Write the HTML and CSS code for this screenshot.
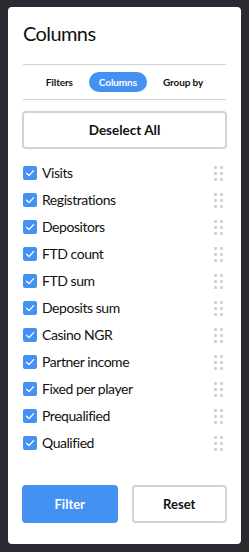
FILE: index.html
```html
<!DOCTYPE html>
<html>
<head>
<meta charset="utf-8">
<link rel="stylesheet" href="styles.css">
</head>
<body>
<div class="panel">
  <h1 class="title">Columns</h1>
  <div class="tabs">
    <span class="tab">Filters</span>
    <span class="tab active">Columns</span>
    <span class="tab">Group by</span>
  </div>
  <button class="btn outline deselect">Deselect All</button>
  <ul class="list">
    <li class="row"><span class="check"><svg viewBox="0 0 14 14"><path d="M3.5 7.2 L6 9.6 L10.6 4.6" /></svg></span><span class="label">Visits</span><span class="handle"><i></i><i></i><i></i><i></i><i></i><i></i></span></li>
    <li class="row"><span class="check"><svg viewBox="0 0 14 14"><path d="M3.5 7.2 L6 9.6 L10.6 4.6" /></svg></span><span class="label">Registrations</span><span class="handle"><i></i><i></i><i></i><i></i><i></i><i></i></span></li>
    <li class="row"><span class="check"><svg viewBox="0 0 14 14"><path d="M3.5 7.2 L6 9.6 L10.6 4.6" /></svg></span><span class="label">Depositors</span><span class="handle"><i></i><i></i><i></i><i></i><i></i><i></i></span></li>
    <li class="row"><span class="check"><svg viewBox="0 0 14 14"><path d="M3.5 7.2 L6 9.6 L10.6 4.6" /></svg></span><span class="label">FTD count</span><span class="handle"><i></i><i></i><i></i><i></i><i></i><i></i></span></li>
    <li class="row"><span class="check"><svg viewBox="0 0 14 14"><path d="M3.5 7.2 L6 9.6 L10.6 4.6" /></svg></span><span class="label">FTD sum</span><span class="handle"><i></i><i></i><i></i><i></i><i></i><i></i></span></li>
    <li class="row"><span class="check"><svg viewBox="0 0 14 14"><path d="M3.5 7.2 L6 9.6 L10.6 4.6" /></svg></span><span class="label">Deposits sum</span><span class="handle"><i></i><i></i><i></i><i></i><i></i><i></i></span></li>
    <li class="row"><span class="check"><svg viewBox="0 0 14 14"><path d="M3.5 7.2 L6 9.6 L10.6 4.6" /></svg></span><span class="label">Casino NGR</span><span class="handle"><i></i><i></i><i></i><i></i><i></i><i></i></span></li>
    <li class="row"><span class="check"><svg viewBox="0 0 14 14"><path d="M3.5 7.2 L6 9.6 L10.6 4.6" /></svg></span><span class="label">Partner income</span><span class="handle"><i></i><i></i><i></i><i></i><i></i><i></i></span></li>
    <li class="row"><span class="check"><svg viewBox="0 0 14 14"><path d="M3.5 7.2 L6 9.6 L10.6 4.6" /></svg></span><span class="label">Fixed per player</span><span class="handle"><i></i><i></i><i></i><i></i><i></i><i></i></span></li>
    <li class="row"><span class="check"><svg viewBox="0 0 14 14"><path d="M3.5 7.2 L6 9.6 L10.6 4.6" /></svg></span><span class="label">Prequalified</span><span class="handle"><i></i><i></i><i></i><i></i><i></i><i></i></span></li>
    <li class="row"><span class="check"><svg viewBox="0 0 14 14"><path d="M3.5 7.2 L6 9.6 L10.6 4.6" /></svg></span><span class="label">Qualified</span><span class="handle"><i></i><i></i><i></i><i></i><i></i><i></i></span></li>
  </ul>
  <div class="actions">
    <button class="btn primary">Filter</button>
    <button class="btn outline">Reset</button>
  </div>
</div>
</body>
</html>
```

FILE: styles.css
```css
* { box-sizing: border-box; }
html, body { margin: 0; padding: 0; }
body {
  background: #2b2a31;
  font-family: Lato, "Noto Sans", sans-serif;
  color: #111;
  padding: 7px 8px 8px 8px;
}
.panel {
  background: #fff;
  border-radius: 4px;
  height: 537px;
  padding: 0 14px;
  display: flex;
  flex-direction: column;
}
.title {
  margin: 0;
  padding-top: 12px;
  font-size: 20px;
  font-weight: 400;
  line-height: 28px;
  letter-spacing: -0.6px;
  padding-left: 1px;
  height: 57px;
}
.tabs {
  border-top: 1px solid #d4d4d4;
  border-bottom: 1px solid #d4d4d4;
  margin: 0 1px;
  height: 36px;
  display: flex;
  align-items: center;
  justify-content: center;
  gap: 6px;
}
.tab {
  font-size: 10px;
  font-weight: 700;
  height: 20px;
  line-height: 20px;
  padding: 0 10px;
  border-radius: 10px;
  color: #111;
  letter-spacing: -0.1px;
}
.tab.active {
  background: #4391f2;
  color: #fff;
}
.btn {
  font-family: inherit;
  font-weight: 700;
  font-size: 13px;
  border-radius: 4px;
  height: 38px;
  cursor: pointer;
}
.outline {
  background: #fff;
  border: 2px solid #d2d2d2;
  color: #111;
}
.primary {
  background: #4391f2;
  border: 2px solid #4391f2;
  color: #fff;
}
.deselect {
  margin-top: 11px;
  width: 100%;
  font-size: 13.5px;
}
.list {
  list-style: none;
  margin: 10px 0 0 0;
  padding: 0 0 0 1px;
}
.row {
  height: 27px;
  display: flex;
  align-items: center;
}
.check {
  width: 14px;
  height: 14px;
  border-radius: 2px;
  background: #4391f2;
  display: flex;
}
.check svg {
  width: 14px;
  height: 14px;
  fill: none;
  stroke: #fff;
  stroke-width: 1.3;
  stroke-linecap: round;
  stroke-linejoin: round;
}
.label {
  margin-left: 5px;
  font-size: 14px;
  letter-spacing: -0.45px;
  flex: 1;
}
.handle {
  display: grid;
  grid-template-columns: 3px 3px;
  grid-auto-rows: 3px;
  column-gap: 3px;
  row-gap: 3px;
  margin-right: 4px;
  margin-top: 1px;
}
.handle i {
  background: #d0d0d0;
  border-radius: 1px;
}
.actions {
  margin-top: auto;
  margin-bottom: 21px;
  display: flex;
  gap: 14px;
}
.actions .btn {
  flex: 1;
}
```
